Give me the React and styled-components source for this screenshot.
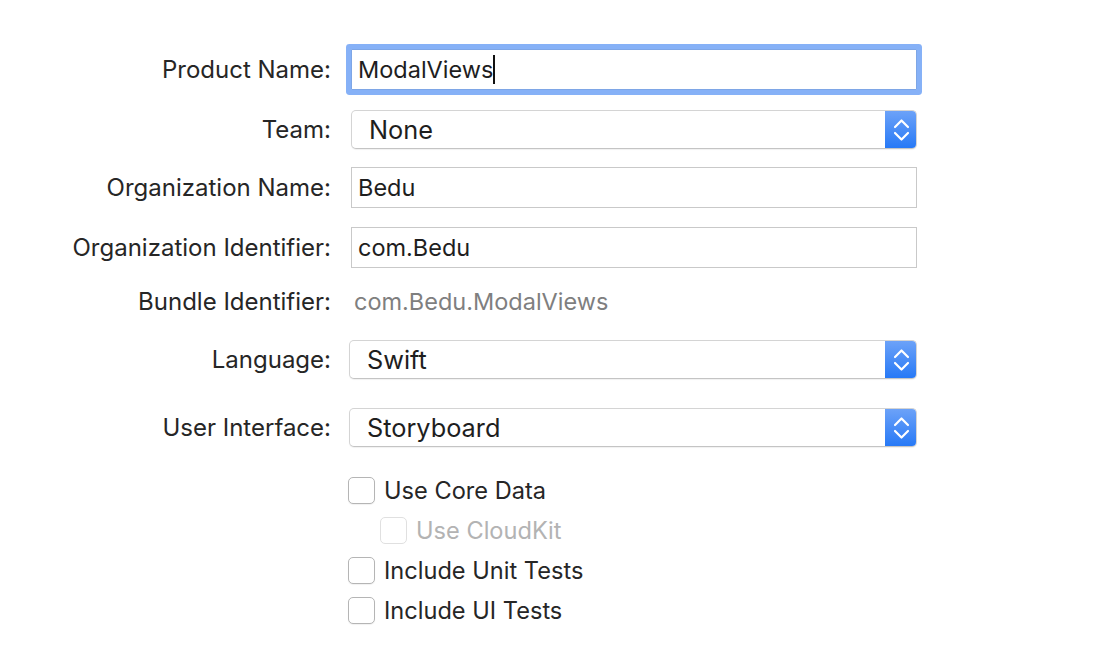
import React from "react";
import styled, { createGlobalStyle } from "styled-components";

const GlobalStyle = createGlobalStyle`
  html, body {
    margin: 0;
    padding: 0;
    background: #ffffff;
  }
  body {
    font-family: Inter, "Noto Sans", "Liberation Sans", sans-serif;
    color: #262626;
  }
`;

const Page = styled.div`
  width: 1106px;
  height: 668px;
  padding-top: 49px;
  box-sizing: border-box;
  overflow: hidden;
`;

const Row = styled.div`
  display: grid;
  grid-template-columns: 331px 568px;
  column-gap: 18px;
  align-items: center;
  height: ${(p) => p.h}px;
  margin-top: ${(p) => p.gap || 0}px;
`;

const Label = styled.div`
  text-align: right;
  font-size: 24px;
  color: #262626;
  white-space: nowrap;
`;

const TextField = styled.div`
  position: relative;
  margin-left: 2px;
  height: 41px;
  box-sizing: border-box;
  border: 1px solid #c9c9c9;
  background: #fff;
  display: flex;
  align-items: center;
  padding-left: 6px;
  font-size: 23.5px;
  color: #1e1e1e;
  box-shadow: ${(p) => (p.focused ? "0 0 0 5px #86b1f7" : "none")};
  border-radius: ${(p) => (p.focused ? "1px" : "0")};
  border-color: ${(p) => (p.focused ? "#7ea6e6" : "#c9c9c9")};
`;

const Caret = styled.span`
  display: inline-block;
  width: 2px;
  height: 29px;
  background: #111;
  margin-left: 0;
`;

const Plain = styled.div`
  padding-left: 5px;
  font-size: 23.5px;
  color: #7f7f7f;
`;

const Popup = styled.div`
  margin-left: ${(p) => p.inset || 0}px;
  height: 39px;
  box-sizing: border-box;
  border: 1px solid #d4d4d4;
  border-bottom-color: #c4c4c4;
  border-radius: 5px;
  background: #fff;
  box-shadow: 0 1px 1px rgba(0, 0, 0, 0.06);
  display: flex;
  align-items: center;
  overflow: hidden;
`;

const PopupText = styled.div`
  flex: 1;
  padding-left: 17px;
  font-size: 25.3px;
  color: #1e1e1e;
`;

const Stepper = styled.div`
  width: 32px;
  align-self: stretch;
  margin: -1px -1px -1px 0;
  border-radius: 0 5px 5px 0;
  background: linear-gradient(#6ea3f8, #2578f6);
  display: flex;
  align-items: center;
  justify-content: center;
`;

const CheckRow = styled.div`
  display: flex;
  align-items: center;
  height: 27px;
  margin-top: ${(p) => p.gap || 0}px;
  padding-left: ${(p) => p.indent}px;
`;

const Box = styled.div`
  width: 27px;
  height: 27px;
  box-sizing: border-box;
  border: 1px solid ${(p) => (p.disabled ? "#e0e0e0" : "#b5b5b5")};
  border-radius: 5px;
  background: #fff;
  box-shadow: ${(p) => (p.disabled ? "none" : "0 1px 1px rgba(0,0,0,0.06)")};
`;

const CheckText = styled.span`
  margin-left: 9px;
  font-size: 23.6px;
  color: ${(p) => (p.disabled ? "#b3b3b3" : "#262626")};
`;

const Chevrons = () => (
  <svg width="17" height="26" viewBox="0 0 17 26">
    <path
      d="M2 10 L8.5 3.5 L15 10 M2 16 L8.5 22.5 L15 16"
      fill="none"
      stroke="#fff"
      strokeWidth="2.2"
      strokeLinecap="round"
      strokeLinejoin="round"
    />
  </svg>
);

function Select({ value, inset }) {
  return (
    <Popup inset={inset}>
      <PopupText>{value}</PopupText>
      <Stepper>
        <Chevrons />
      </Stepper>
    </Popup>
  );
}

function Check({ label, disabled, indent, gap }) {
  return (
    <CheckRow indent={indent} gap={gap}>
      <Box disabled={disabled} />
      <CheckText disabled={disabled}>{label}</CheckText>
    </CheckRow>
  );
}

export default function App() {
  return (
    <Page>
      <GlobalStyle />
      <Row h={41}>
        <Label>Product Name:</Label>
        <TextField focused>
          ModalViews
          <Caret />
        </TextField>
      </Row>
      <Row h={39} gap={20}>
        <Label>Team:</Label>
        <Select value="None" inset={2} />
      </Row>
      <Row h={41} gap={18}>
        <Label>Organization Name:</Label>
        <TextField>Bedu</TextField>
      </Row>
      <Row h={41} gap={19}>
        <Label>Organization Identifier:</Label>
        <TextField>com.Bedu</TextField>
      </Row>
      <Row h={34} gap={16}>
        <Label>Bundle Identifier:</Label>
        <Plain>com.Bedu.ModalViews</Plain>
      </Row>
      <Row h={39} gap={22}>
        <Label>Language:</Label>
        <Select value="Swift" />
      </Row>
      <Row h={39} gap={29}>
        <Label>User Interface:</Label>
        <Select value="Storyboard" />
      </Row>
      <Check label="Use Core Data" indent={348} gap={30} />
      <Check label="Use CloudKit" indent={380} gap={13} disabled />
      <Check label="Include Unit Tests" indent={348} gap={13} />
      <Check label="Include UI Tests" indent={348} gap={13} />
    </Page>
  );
}
